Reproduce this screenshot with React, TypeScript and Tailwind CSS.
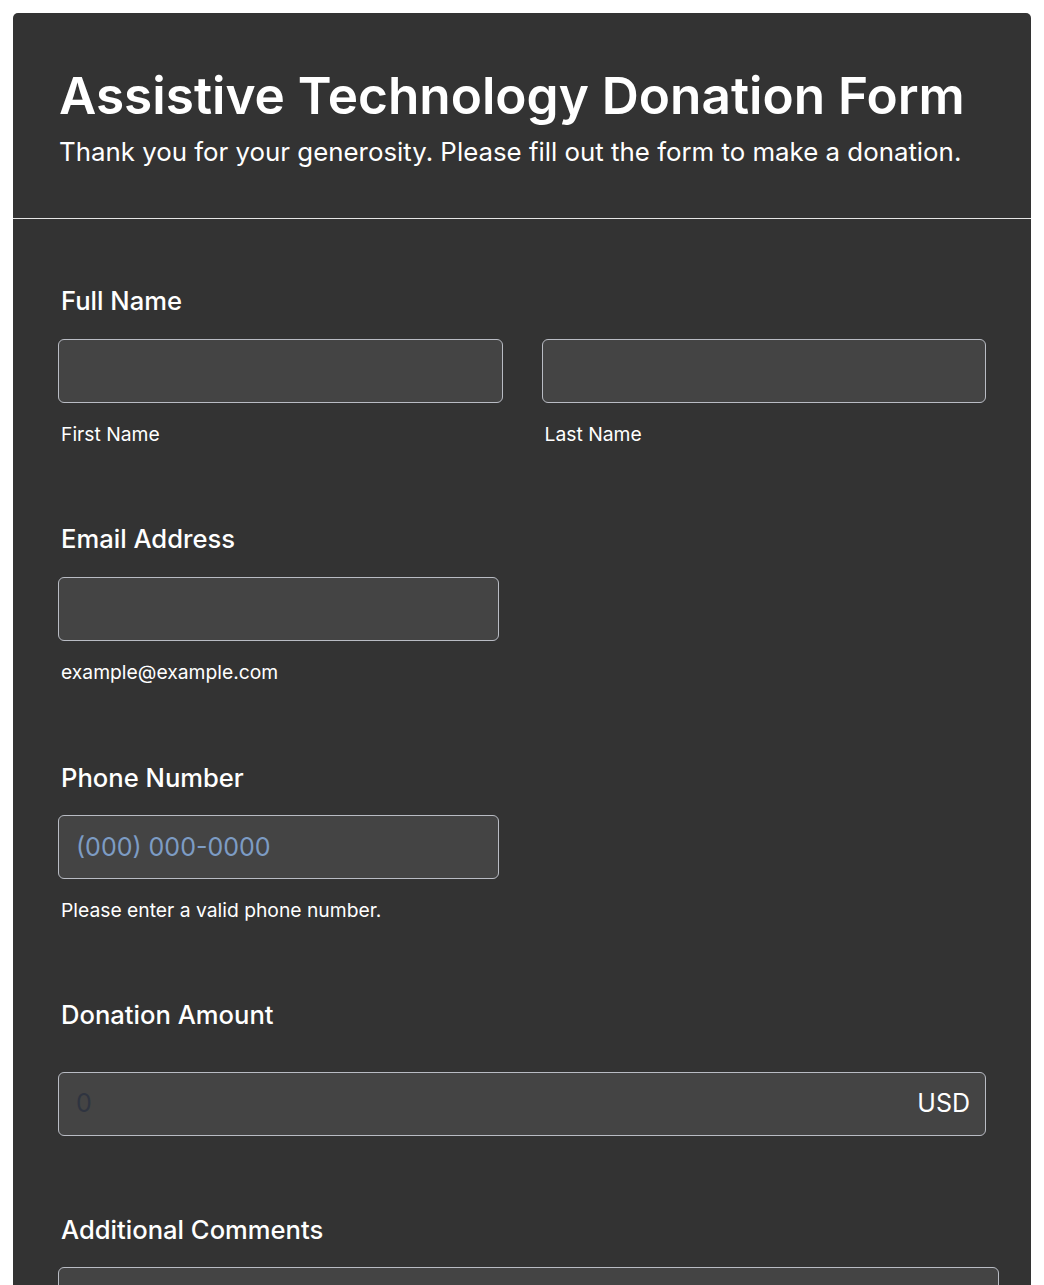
import React from "react";

function Field({
  label,
  children,
  className = "",
}: {
  label: string;
  children: React.ReactNode;
  className?: string;
}) {
  return (
    <div className={className}>
      <label className="block pl-[3px] text-[25.6px] font-medium leading-[30px] text-white">
        {label}
      </label>
      {children}
    </div>
  );
}

const inputClass =
  "block h-[64px] rounded-[6px] border border-[#b9bcc4] bg-[#444444] px-[17px] text-[25px] text-white outline-none";

const hintClass = "mt-[19px] pl-[3px] text-[19.3px] leading-[24px] text-white";

export default function App(): React.ReactElement {
  return (
    <div
      className="min-h-screen bg-white p-[13px]"
      style={{ fontFamily: "Inter, 'Noto Sans', sans-serif" }}
    >
      <div className="overflow-hidden rounded-t-[5px] bg-[#333333]">
        {/* Header */}
        <div className="border-b border-[#e5e5e5] px-[46px] pb-[50px] pt-[54px]">
          <h1 className="text-[51.3px] font-semibold leading-[56px] text-white">
            Assistive Technology Donation Form
          </h1>
          <p className="mt-[13px] text-[25.85px] leading-[32px] text-white">
            Thank you for your generosity. Please fill out the form to make a donation.
          </p>
        </div>

        {/* Form body */}
        <div className="px-[45px] pt-[67px]">
          <Field label="Full Name">
            <div className="mt-[23px] grid w-[928px] grid-cols-2 gap-x-[39px]">
              <div>
                <input className={`${inputClass} w-full`} />
                <p className={hintClass}>First Name</p>
              </div>
              <div>
                <input className={`${inputClass} w-full`} />
                <p className={hintClass}>Last Name</p>
              </div>
            </div>
          </Field>

          <Field label="Email Address" className="mt-[78px]">
            <input className={`${inputClass} mt-[23px] w-[441px]`} />
            <p className={hintClass}>example@example.com</p>
          </Field>

          <Field label="Phone Number" className="mt-[79px]">
            <input
              className={`${inputClass} mt-[22px] w-[441px] placeholder:text-[#7d9cc4]`}
              placeholder="(000) 000-0000"
            />
            <p className={hintClass}>Please enter a valid phone number.</p>
          </Field>

          <Field label="Donation Amount" className="mt-[78px]">
            <div className={`${inputClass} mt-[42px] flex w-[928px] items-center justify-between !pr-[15px]`}>
              <span className="text-[#2f3440]">0</span>
              <span className="text-white">USD</span>
            </div>
          </Field>

          <Field label="Additional Comments" className="mt-[79px]">
            <textarea className="mt-[22px] block h-[160px] w-[941px] rounded-[6px] border border-[#b9bcc4] bg-[#444444] outline-none" />
          </Field>
        </div>
      </div>
    </div>
  );
}
